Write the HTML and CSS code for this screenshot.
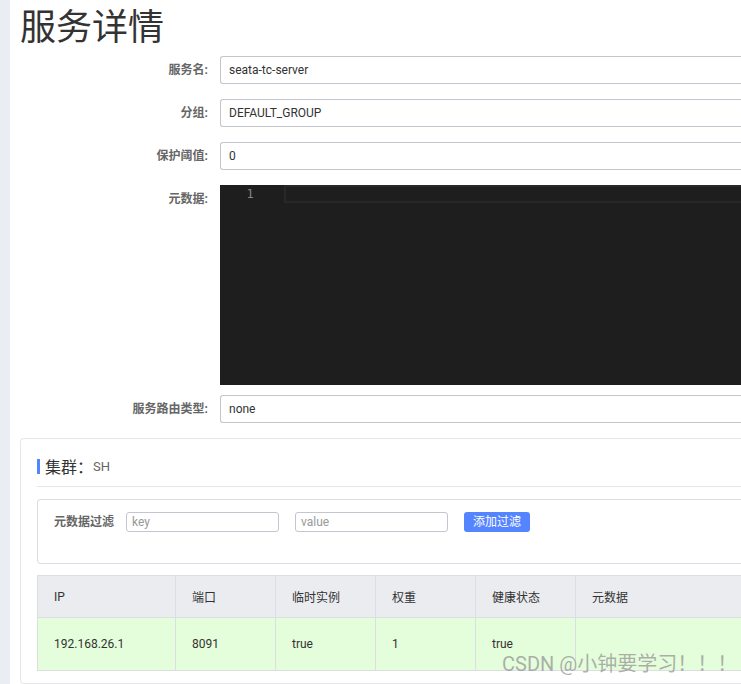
FILE: index.html
```html
<!DOCTYPE html>
<html lang="zh-CN">
<head>
<meta charset="utf-8">
<title>服务详情</title>
<link rel="stylesheet" href="styles.css">
</head>
<body>
<div class="layout">
  <aside class="side"></aside>
  <main class="main">
    <h1 class="page-title">服务详情</h1>

    <div class="form-row">
      <label class="form-label">服务名:</label>
      <div class="input">seata-tc-server</div>
    </div>
    <div class="form-row">
      <label class="form-label">分组:</label>
      <div class="input">DEFAULT_GROUP</div>
    </div>
    <div class="form-row">
      <label class="form-label">保护阈值:</label>
      <div class="input">0</div>
    </div>
    <div class="form-row form-row-editor">
      <label class="form-label">元数据:</label>
      <div class="editor">
        <div class="gutter"><span class="line-no">1</span></div>
        <div class="code"><div class="current-line"></div></div>
      </div>
    </div>
    <div class="form-row">
      <label class="form-label">服务路由类型:</label>
      <div class="input">none</div>
    </div>

    <section class="card">
      <div class="card-title"><span class="bar"></span><span class="card-title-main">集群：</span><span class="card-title-sub">SH</span></div>
      <div class="divider"></div>
      <div class="filter-box">
        <span class="filter-label">元数据过滤</span>
        <div class="small-input">key</div>
        <div class="small-input">value</div>
        <button class="btn-primary">添加过滤</button>
      </div>
      <table class="table">
        <thead>
          <tr>
            <th class="c-ip">IP</th>
            <th class="c-n">端口</th>
            <th class="c-n">临时实例</th>
            <th class="c-n">权重</th>
            <th class="c-n">健康状态</th>
            <th class="c-last">元数据</th>
          </tr>
        </thead>
        <tbody>
          <tr>
            <td>192.168.26.1</td>
            <td>8091</td>
            <td>true</td>
            <td>1</td>
            <td>true</td>
            <td class="c-last"></td>
          </tr>
        </tbody>
      </table>
    </section>
  </main>
</div>
<div class="watermark">CSDN @小钟要学习！！！</div>
</body>
</html>
```

FILE: styles.css
```css
html, body {
  margin: 0;
  padding: 0;
  overflow: hidden;
  background: #fff;
}
body {
  font-family: Roboto, "Noto Sans CJK SC", sans-serif;
  font-size: 12px;
  color: #333;
  width: 741px;
  height: 684px;
  position: relative;
}
.layout {
  display: flex;
  min-height: 684px;
}
.side {
  flex: none;
  width: 10px;
  background: #eaedf1;
}
.main {
  flex: 1;
  min-width: 0;
  padding-left: 10px;
}
.page-title {
  margin: 0;
  padding-top: 4px;
  font-size: 36px;
  line-height: 48px;
  font-weight: normal;
  color: #333;
  margin-bottom: 4px;
}
.form-row {
  display: flex;
  align-items: flex-start;
  margin-bottom: 15px;
}
.form-row-editor {
  margin-bottom: 10px;
}
.form-label {
  flex: none;
  width: 188px;
  margin-right: 12px;
  text-align: right;
  padding-top: 1px;
  line-height: 27px;
  font-weight: bold;
  color: #666;
}
.input {
  flex: 1;
  height: 28px;
  box-sizing: border-box;
  border: 1px solid #c4c6cf;
  border-right: 0;
  border-radius: 3px 0 0 3px;
  padding: 1px 8px 0;
  line-height: 25px;
  color: #333;
}
.editor {
  flex: 1;
  height: 200px;
  background: #1e1e1e;
  display: flex;
}
.gutter {
  flex: none;
  width: 64px;
  height: 18px;
  display: flex;
  justify-content: center;
  align-items: center;
}
.line-no {
  font-family: "DejaVu Sans Mono", monospace;
  font-size: 12px;
  color: #858585;
  margin-right: 4px;
}
.code {
  flex: 1;
}
.current-line {
  height: 18px;
  box-sizing: border-box;
  border: 2px solid #282828;
  border-right: 0;
}
.card {
  border: 1px solid #e6e7eb;
  border-right: 0;
  border-radius: 4px 0 0 4px;
  padding: 16px 0 12px 16px;
}
.card-title {
  display: flex;
  align-items: center;
  height: 22px;
}
.bar {
  width: 3px;
  height: 15px;
  background: #5584ff;
  margin-right: 5px;
}
.card-title-main {
  font-size: 16px;
  color: #333;
}
.card-title-sub {
  font-size: 13px;
  color: #666;
}
.divider {
  height: 1px;
  background: #e6e7eb;
  margin-top: 9px;
  margin-bottom: 12px;
}
.filter-box {
  height: 65px;
  box-sizing: border-box;
  border: 1px solid #dcdee3;
  border-right: 0;
  border-radius: 4px 0 0 4px;
  padding: 12px 16px;
  display: flex;
  align-items: flex-start;
}
.filter-label {
  padding-top: 1px;
  line-height: 19px;
  font-weight: bold;
  color: #666;
  margin-right: 12px;
}
.small-input {
  flex: none;
  width: 153px;
  height: 20px;
  box-sizing: border-box;
  border: 1px solid #c4c6cf;
  border-radius: 3px;
  padding: 0 5px;
  line-height: 19px;
  color: #999;
  margin-right: 16px;
}
.btn-primary {
  flex: none;
  width: 66px;
  height: 20px;
  border: none;
  border-radius: 3px;
  background: #5584ff;
  color: #fff;
  font-family: inherit;
  font-size: 12px;
  padding: 1px 0 0;
  line-height: 19px;
}
.table {
  margin-top: 11px;
  width: 100%;
  border-collapse: collapse;
  table-layout: fixed;
}
.table th, .table td {
  border: 1px solid #dcdee3;
  text-align: left;
  padding: 0 16px;
  font-weight: normal;
  color: #333;
}
.table th.c-last, .table td.c-last {
  border-right: 0;
}
.table th {
  background: #ebecf0;
  height: 41px;
}
.table td {
  background: #e4fdda;
  height: 52px;
}
.c-ip {
  width: 105px;
}
.c-n {
  width: 67px;
}
.watermark {
  position: absolute;
  left: 502px;
  top: 654px;
  font-size: 20px;
  line-height: 20px;
  color: rgba(150, 150, 150, 0.75);
  white-space: nowrap;
}
```
